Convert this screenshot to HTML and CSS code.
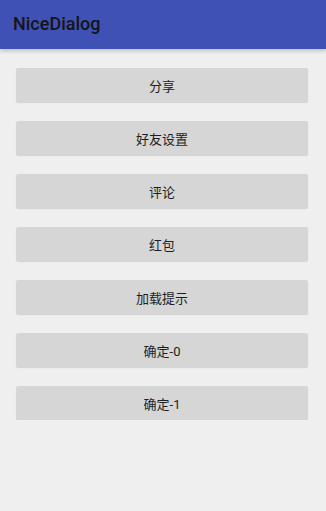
FILE: index.html
```html
<!DOCTYPE html>
<html lang="zh">
  <head>
    <meta charset="UTF-8" />
    <meta name="viewport" content="width=device-width, initial-scale=1.0" />
    <title>NiceDialog</title>
    <link rel="stylesheet" href="styles.css">
  </head>
  <body>
    <nav class="toolbar">
      <div class="title">NiceDialog</div>
    </nav>

    <div class="container">
      <button class="btn">分享</button>
      <button class="btn">好友设置</button>
      <button class="btn">评论</button>
      <button class="btn">红包</button>
      <button class="btn">加载提示</button>
      <button class="btn">确定-0</button>
      <button class="btn">确定-1</button>
    </div>
  </body>
</html>
```

FILE: styles.css
```css
body {
  font-family: Roboto, "Noto Sans CJK SC", sans-serif;
  background: #efefef;
  margin: 0;
  padding: 0;
  color: #212121;
}
.toolbar {
  background: #3f51b5;
  height: 49px;
  display: flex;
  align-items: center;
  padding: 0 13px;
  box-shadow: 0 2px 4px rgba(0, 0, 0, 0.2);
}
.title {
  font-size: 18px;
  font-weight: 500;
  color: #151515;
  margin-top: -2px;
}
.container {
  display: flex;
  flex-direction: column;
  gap: 19px;
  padding: 19px 18px 0 16px;
}
.btn {
  height: 34px;
  padding: 0;
  border: none;
  border-radius: 2px;
  background: #d6d6d6;
  color: #1e1e1e;
  font-family: Roboto, "Noto Sans CJK SC", sans-serif;
  font-size: 13px;
  box-shadow: 0 1px 1px rgba(0, 0, 0, 0.12);
}
```
